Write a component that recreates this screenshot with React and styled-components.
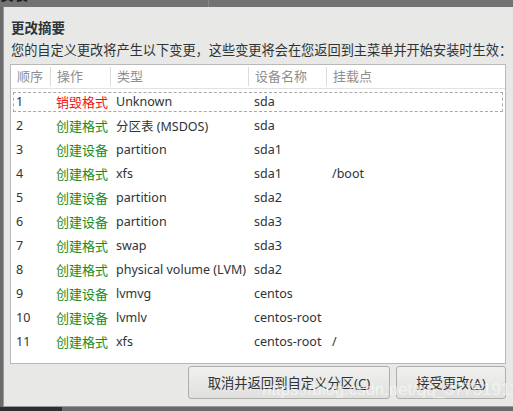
import React from "react";
import styled, { createGlobalStyle } from "styled-components";

const GlobalStyle = createGlobalStyle`
  html, body {
    margin: 0;
    padding: 0;
    background: #737373;
  }
  body {
    width: 513px;
    height: 411px;
    overflow: hidden;
    font-family: "Noto Sans", "Noto Sans CJK SC", sans-serif;
  }
`;

const Screen = styled.div`
  position: relative;
  width: 513px;
  height: 411px;
  display: flex;
  flex-direction: column;
  background: #737373;
`;

const TopStrip = styled.div`
  height: 7px;
  flex-shrink: 0;
  overflow: hidden;
  display: flex;
  font-size: 14px;
  line-height: 14px;
  color: #1e1e1e;
`;

const TopCell = styled.div`
  width: ${(p) => p.$w}px;
  padding-left: ${(p) => p.$pl}px;
  margin-top: -12px;
  border-right: ${(p) => (p.$line ? "1px solid #8a8a8a" : "none")};
  font-weight: ${(p) => (p.$bold ? "bold" : "normal")};
  box-sizing: border-box;
  height: 22px;
  flex-shrink: 0;
`;

const Middle = styled.div`
  flex: 1;
  display: flex;
  min-height: 0;
`;

const Gutter = styled.div`
  width: 3px;
  flex-shrink: 0;
  background: #6a6a6a;
`;

const Dialog = styled.div`
  flex: 1;
  min-width: 0;
  background: #e8e8e7;
  border-left: 1px solid #9a9a9a;
  border-bottom: 1px solid #9a9a9a;
  padding: 11px 7px 7px 6px;
  display: flex;
  flex-direction: column;
  color: #2e3436;
`;

const Title = styled.div`
  font-size: 13.5px;
  font-weight: bold;
  line-height: 20px;
  margin-left: 1px;
`;

const Subtitle = styled.div`
  font-size: 13.2px;
  line-height: 20px;
  margin-top: 2px;
  margin-left: 1px;
  white-space: nowrap;
`;

const Table = styled.div`
  margin-top: 4px;
  height: 300px;
  flex-shrink: 0;
  box-sizing: border-box;
  background: #ffffff;
  border: 1px solid #b8b8b6;
`;

const Row = styled.div`
  position: relative;
  display: grid;
  grid-template-columns: 40px 60px 138px 78px 1fr;
  height: 24px;
  align-items: center;
  font-size: 12.5px;
  color: #2e3436;
`;

const HeadRow = styled(Row)`
  height: 23px;
  border-bottom: 1px solid #e2e2e2;
  color: #8f8f8f;
  font-size: 13px;
`;

const HeadCell = styled.div`
  padding-left: 6px;
  height: 19px;
  line-height: 19px;
  border-right: ${(p) => (p.$last ? "none" : "1px solid #dcdcdc")};
`;

const Cell = styled.div`
  padding-left: 5px;
  white-space: nowrap;
  font-size: ${(p) => (p.$cjk ? "13px" : "inherit")};
  color: ${(p) => p.$color || "inherit"};
`;

const Focus = styled.div`
  position: absolute;
  left: 2px;
  right: 2px;
  top: 3px;
  bottom: 1px;
  border: 1px dashed #a9a9a9;
  pointer-events: none;
`;

const Buttons = styled.div`
  margin-top: 2px;
  display: flex;
  justify-content: flex-end;
  gap: 6px;
`;

const Button = styled.button`
  width: ${(p) => p.$w}px;
  height: 33px;
  font-family: inherit;
  font-size: 13.3px;
  color: #2e3436;
  background: linear-gradient(#f0f0ef, #e0e0de);
  border: 1px solid #adadab;
  border-radius: 3px;
  padding: 0;
  u {
    text-decoration: underline;
  }
`;

const Watermark = styled.div`
  position: absolute;
  left: 262px;
  top: 380px;
  font-family: "Liberation Sans", sans-serif;
  font-size: 16.8px;
  color: rgba(255, 255, 255, 0.55);
  white-space: nowrap;
  pointer-events: none;
`;

const BottomStrip = styled.div`
  height: 4px;
  flex-shrink: 0;
  display: flex;
`;

const BottomDark = styled.div`
  width: 62px;
  background: #2e2e2e;
`;

const BottomRest = styled.div`
  flex: 1;
  background: #6a6a6a;
`;

const RED = "#ee1111";
const GREEN = "#1a8c1a";

const rows = [
  ["1", "销毁格式", "Unknown", "sda", ""],
  ["2", "创建格式", "分区表 (MSDOS)", "sda", ""],
  ["3", "创建设备", "partition", "sda1", ""],
  ["4", "创建格式", "xfs", "sda1", "/boot"],
  ["5", "创建设备", "partition", "sda2", ""],
  ["6", "创建设备", "partition", "sda3", ""],
  ["7", "创建格式", "swap", "sda3", ""],
  ["8", "创建格式", "physical volume (LVM)", "sda2", ""],
  ["9", "创建设备", "lvmvg", "centos", ""],
  ["10", "创建设备", "lvmlv", "centos-root", ""],
  ["11", "创建格式", "xfs", "centos-root", "/"],
];

const heads = ["顺序", "操作", "类型", "设备名称", "挂载点"];

export default function App() {
  return (
    <Screen>
      <GlobalStyle />
      <TopStrip>
        <TopCell $w={209} $pl={0} $line $bold>
          安装
        </TopCell>
        <TopCell $w={300} $pl={24}>
          sda3
        </TopCell>
      </TopStrip>
      <Middle>
        <Gutter />
        <Dialog>
          <Title>更改摘要</Title>
          <Subtitle>
            您的自定义更改将产生以下变更，这些变更将会在您返回到主菜单并开始安装时生效：
          </Subtitle>
          <Table>
            <HeadRow>
              {heads.map((h, i) => (
                <HeadCell key={h} $last={i === heads.length - 1}>
                  {h}
                </HeadCell>
              ))}
            </HeadRow>
            {rows.map((r, i) => (
              <Row key={r[0]}>
                {i === 0 && <Focus />}
                <Cell>{r[0]}</Cell>
                <Cell $cjk $color={i === 0 ? RED : GREEN}>
                  {r[1]}
                </Cell>
                <Cell>{r[2]}</Cell>
                <Cell>{r[3]}</Cell>
                <Cell>{r[4]}</Cell>
              </Row>
            ))}
          </Table>
          <Buttons>
            <Button $w={202}>
              取消并返回到自定义分区(<u>C</u>)
            </Button>
            <Button $w={110}>
              接受更改(<u>A</u>)
            </Button>
          </Buttons>
        </Dialog>
      </Middle>
      <BottomStrip>
        <BottomDark />
        <BottomRest />
      </BottomStrip>
      <Watermark>https://blog.csdn.net/qq_37751911</Watermark>
    </Screen>
  );
}
